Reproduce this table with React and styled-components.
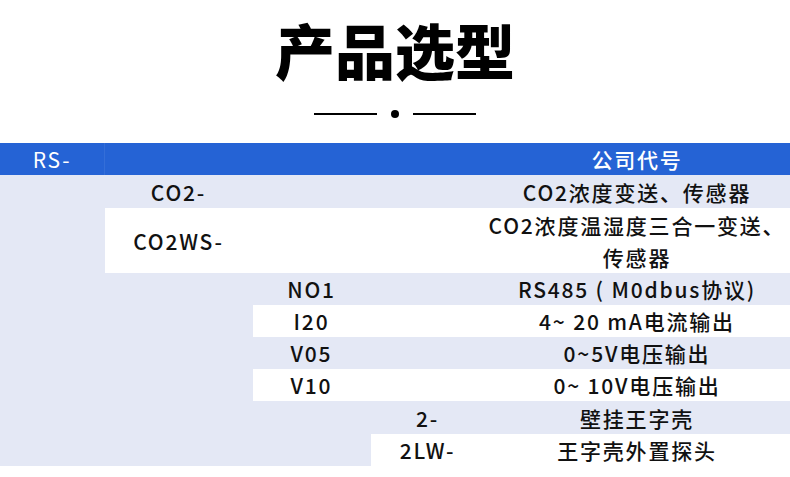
import React from 'react'
import styled, { createGlobalStyle } from 'styled-components'

const Global = createGlobalStyle`
  html, body {
    margin: 0;
    padding: 0;
    background: #fff;
  }
  body {
    font-family: "Noto Sans CJK SC", "Noto Sans", sans-serif;
    color: #111;
  }
`

const BLUE = '#2563d5'
const PALE = '#e4e8f5'

const Page = styled.div`
  width: 790px;
  height: 477px;
  overflow: hidden;
  display: flex;
  flex-direction: column;
  align-items: center;
`

const Title = styled.h1`
  margin: 16px 0 0;
  font-size: 60px;
  line-height: 66px;
  font-weight: 900;
  color: #000;
  letter-spacing: 0;
`

const Divider = styled.div`
  margin-top: 28px;
  display: flex;
  align-items: center;
  gap: 14px;
`

const Line = styled.span`
  width: 63px;
  height: 2px;
  background: #000;
`

const Dot = styled.span`
  width: 8px;
  height: 8px;
  border-radius: 50%;
  background: #000;
`

const Table = styled.div`
  margin-top: 25px;
  width: 100%;
  display: grid;
  grid-template-columns: 105px 148px 118px 114px 1fr;
  grid-template-rows: 32px 33px 65px 32px 32px 32px 32px 33px 32px;
`

const Cell = styled.div`
  grid-column: ${p => p.$col};
  grid-row: ${p => p.$row};
  background: ${p => (p.$head ? BLUE : p.$white ? '#fff' : PALE)};
  color: ${p => (p.$head ? '#fff' : '#111')};
  font-weight: ${p => (p.$light ? 400 : 500)};
  border-right: 1px solid ${p => (p.$edge ? 'rgba(255,255,255,0.07)' : 'transparent')};
  display: flex;
  align-items: center;
  justify-content: center;
  text-align: center;
  font-size: 21px;
  line-height: 32px;
  letter-spacing: 1.8px;
  white-space: nowrap;
`

const rows = [
  { code: 'NO1', desc: 'RS485 ( M0dbus协议)', row: 4 },
  { code: 'I20', desc: '4~ 20 mA电流输出', row: 5, white: true },
  { code: 'V05', desc: '0~5V电压输出', row: 6 },
  { code: 'V10', desc: '0~ 10V电压输出', row: 7, white: true },
]

export default function App() {
  return (
    <Page>
      <Global />
      <Title>产品选型</Title>
      <Divider>
        <Line />
        <Dot />
        <Line />
      </Divider>
      <Table>
        <Cell $head $light $edge $col="1" $row="1">RS-</Cell>
        <Cell $head $col="2 / 5" $row="1" />
        <Cell $head $col="5" $row="1">公司代号</Cell>

        <Cell $col="1" $row="2 / 10" />

        <Cell $col="2" $row="2">CO2-</Cell>
        <Cell $col="3 / 5" $row="2" />
        <Cell $col="5" $row="2">CO2浓度变送、传感器</Cell>

        <Cell $white $col="2" $row="3">CO2WS-</Cell>
        <Cell $white $col="3 / 5" $row="3" />
        <Cell $white $col="5" $row="3">
          CO2浓度温湿度三合一变送、<br />传感器
        </Cell>

        <Cell $col="2" $row="4 / 10" />

        {rows.map(r => (
          <React.Fragment key={r.code}>
            <Cell $white={r.white} $col="3" $row={r.row}>{r.code}</Cell>
            <Cell $white={r.white} $col="4" $row={r.row} />
            <Cell $white={r.white} $col="5" $row={r.row}>{r.desc}</Cell>
          </React.Fragment>
        ))}

        <Cell $col="3" $row="8 / 10" />
        <Cell $col="4" $row="8">2-</Cell>
        <Cell $col="5" $row="8">壁挂王字壳</Cell>
        <Cell $white $col="4" $row="9">2LW-</Cell>
        <Cell $white $col="5" $row="9">王字壳外置探头</Cell>
      </Table>
    </Page>
  )
}
